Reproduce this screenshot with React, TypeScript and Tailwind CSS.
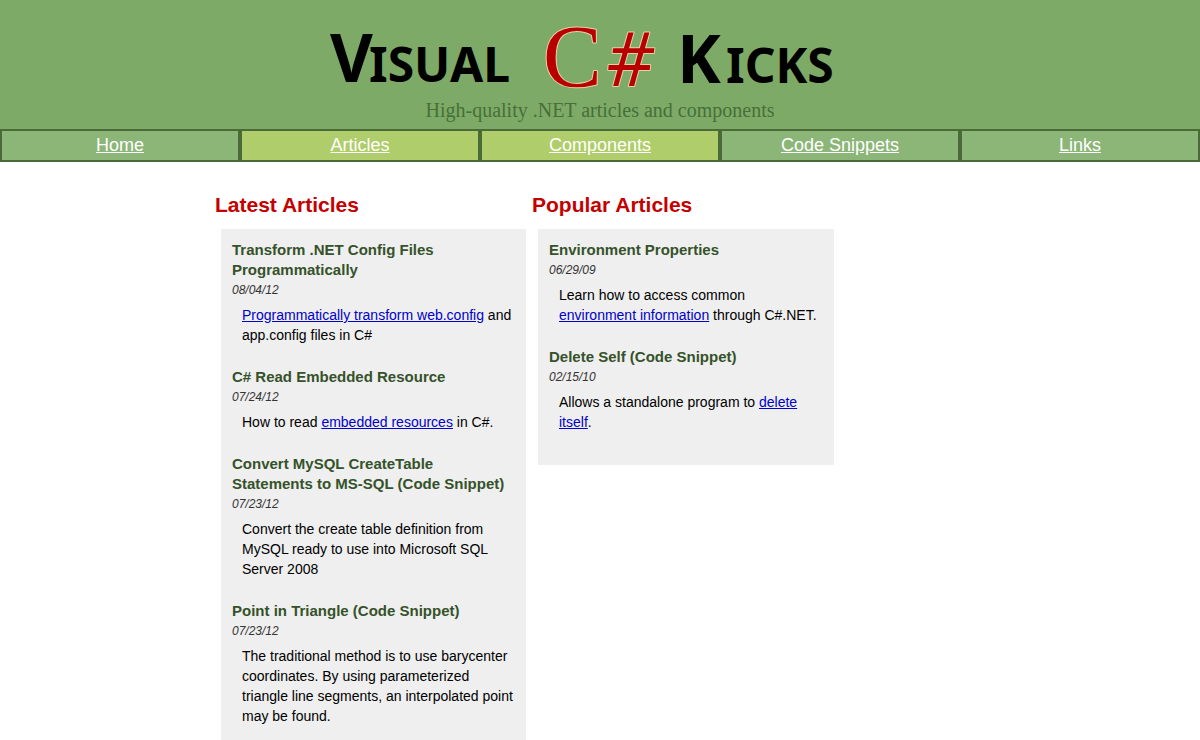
import type { ReactNode } from "react";

type NavItem = { label: string; highlighted: boolean };
type Article = { title: string; date: string; body: ReactNode };

const navItems: NavItem[] = [
  { label: "Home", highlighted: false },
  { label: "Articles", highlighted: true },
  { label: "Components", highlighted: true },
  { label: "Code Snippets", highlighted: false },
  { label: "Links", highlighted: false },
];

function TextLink({ children }: { children: ReactNode }) {
  return (
    <a href="#" className="text-[#0000cc] underline">
      {children}
    </a>
  );
}

const latest: Article[] = [
  {
    title: "Transform .NET Config Files Programmatically",
    date: "08/04/12",
    body: (
      <>
        <TextLink>Programmatically transform web.config</TextLink> and app.config files in C#
      </>
    ),
  },
  {
    title: "C# Read Embedded Resource",
    date: "07/24/12",
    body: (
      <>
        How to read <TextLink>embedded resources</TextLink> in C#.
      </>
    ),
  },
  {
    title: "Convert MySQL CreateTable Statements to MS-SQL (Code Snippet)",
    date: "07/23/12",
    body: "Convert the create table definition from MySQL ready to use into Microsoft SQL Server 2008",
  },
  {
    title: "Point in Triangle (Code Snippet)",
    date: "07/23/12",
    body: "The traditional method is to use barycenter coordinates. By using parameterized triangle line segments, an interpolated point may be found.",
  },
];

const popular: Article[] = [
  {
    title: "Environment Properties",
    date: "06/29/09",
    body: (
      <>
        Learn how to access common <TextLink>environment information</TextLink> through C#.NET.
      </>
    ),
  },
  {
    title: "Delete Self (Code Snippet)",
    date: "02/15/10",
    body: (
      <>
        Allows a standalone program to <TextLink>delete itself</TextLink>.
      </>
    ),
  },
];

function Logo() {
  return (
    <svg width="540" height="78" viewBox="0 0 540 78" className="max-w-full overflow-visible">
      <g className="font-['Noto_Sans',sans-serif] font-bold" fill="#000">
        <text x="0" y="62" fontSize="66">V</text>
        <text x="39" y="62" fontSize="48">ISUAL</text>
        <text x="347" y="63" fontSize="66">K</text>
        <text x="396" y="63" fontSize="48">ICKS</text>
      </g>
      <g
        fill="#b80000"
        stroke="#e8cfa8"
        strokeWidth="2"
        strokeLinejoin="round"
        paintOrder="stroke"
      >
        <text x="213" y="66" fontSize="88" className="font-['Liberation_Serif',serif]">C</text>
        <text x="276" y="66" fontSize="74" className="font-['Noto_Sans',sans-serif] italic">#</text>
      </g>
    </svg>
  );
}

function ArticleColumn({ heading, articles }: { heading: string; articles: Article[] }) {
  return (
    <section>
      <h2 className="text-[21px] leading-6 font-bold text-[#c40000]">{heading}</h2>
      <div className="mt-3 ml-1.5 bg-[#efefef] p-[11px]">
        {articles.map((article) => (
          <article key={article.title} className="pb-[22px]">
            <h3 className="text-[15px] leading-5 font-bold text-[#35522a]">{article.title}</h3>
            <p className="text-xs leading-5 text-[#333] italic">{article.date}</p>
            <p className="mt-[5px] pl-2.5 text-sm leading-5">{article.body}</p>
          </article>
        ))}
      </div>
    </section>
  );
}

export default function App() {
  return (
    <div className="min-h-screen bg-white font-['Liberation_Sans',Arial,sans-serif] text-black">
      <header className="flex flex-col items-center bg-[#7dab67] pt-5 pb-[7px]">
        <h1 aria-label="Visual C# Kicks">
          <Logo />
        </h1>
        <p className="font-['Liberation_Serif',serif] text-xl leading-6 text-[#476f38]">
          High-quality .NET articles and components
        </p>
      </header>
      <nav className="grid grid-cols-5">
        {navItems.map((item) => (
          <a
            key={item.label}
            href="#"
            className={`border-2 border-[#4a6b37] pb-px text-center text-lg leading-7 text-white underline ${
              item.highlighted ? "bg-[#afcd6a]" : "bg-[#8cb678]"
            }`}
          >
            {item.label}
          </a>
        ))}
      </nav>
      <main className="mx-auto grid max-w-[770px] grid-cols-[311px_302px] items-start gap-1.5 pt-[31px]">
        <ArticleColumn heading="Latest Articles" articles={latest} />
        <ArticleColumn heading="Popular Articles" articles={popular} />
      </main>
    </div>
  );
}
